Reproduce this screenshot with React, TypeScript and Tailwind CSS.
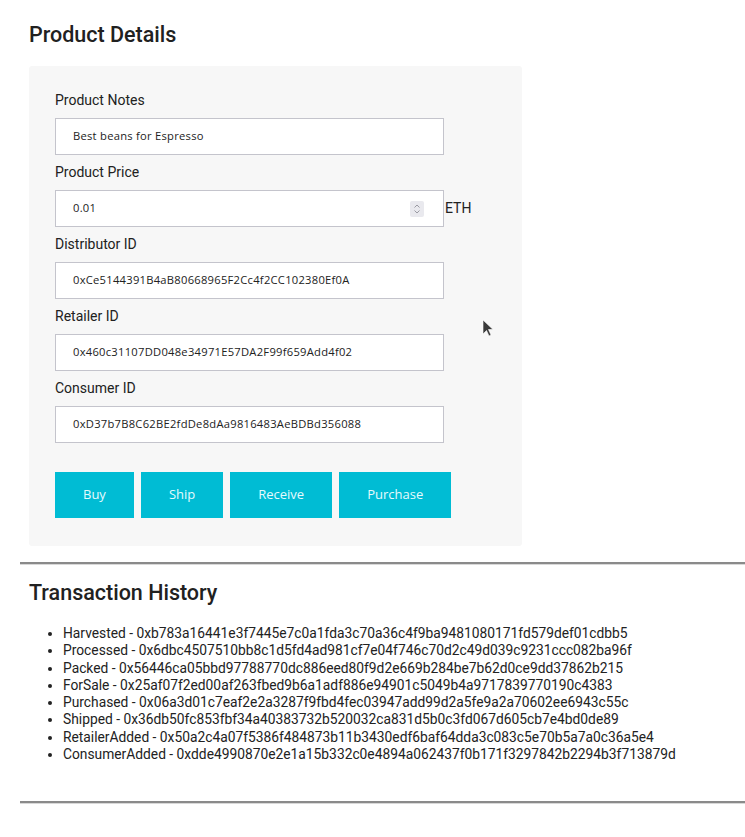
import React from "react";

const fields = [
  { label: "Product Notes", value: "Best beans for Espresso" },
  { label: "Product Price", value: "0.01", price: true },
  { label: "Distributor ID", value: "0xCe5144391B4aB80668965F2Cc4f2CC102380Ef0A" },
  { label: "Retailer ID", value: "0x460c31107DD048e34971E57DA2F99f659Add4f02" },
  { label: "Consumer ID", value: "0xD37b7B8C62BE2fdDe8dAa9816483AeBDBd356088" },
];

const history = [
  "Harvested - 0xb783a16441e3f7445e7c0a1fda3c70a36c4f9ba9481080171fd579def01cdbb5",
  "Processed - 0x6dbc4507510bb8c1d5fd4ad981cf7e04f746c70d2c49d039c9231ccc082ba96f",
  "Packed - 0x56446ca05bbd97788770dc886eed80f9d2e669b284be7b62d0ce9dd37862b215",
  "ForSale - 0x25af07f2ed00af263fbed9b6a1adf886e94901c5049b4a9717839770190c4383",
  "Purchased - 0x06a3d01c7eaf2e2a3287f9fbd4fec03947add99d2a5fe9a2a70602ee6943c55c",
  "Shipped - 0x36db50fc853fbf34a40383732b520032ca831d5b0c3fd067d605cb7e4bd0de89",
  "RetailerAdded - 0x50a2c4a07f5386f484873b11b3430edf6baf64dda3c083c5e70b5a7a0c36a5e4",
  "ConsumerAdded - 0xdde4990870e2e1a15b332c0e4894a062437f0b171f3297842b2294b3f713879d",
];

const buttons = ["Buy", "Ship", "Receive", "Purchase"];

const App = () => {
  return (
    <div className="relative min-h-[837px] bg-white pl-[20px] pt-[22px] font-['Roboto',sans-serif] text-[#212121]">
      <h2 className="ml-[9px] text-[21.5px] font-medium leading-[26px]">Product Details</h2>

      {/* Product form */}
      <div className="ml-[9px] mt-[18px] w-[493px] rounded-[3px] bg-[#f7f7f7] px-[26px] pb-[28px] pt-[25px]">
        {fields.map((f) => (
          <div key={f.label} className="mb-[8px]">
            <label className="block text-[14px] leading-[18px]">{f.label}</label>
            <div className="mt-[9px] flex items-center">
              <div className="flex h-[37px] w-[389px] items-center border border-[#c4c4cc] bg-white pl-[17px] pr-[19px] font-['Open_Sans',sans-serif] text-[11.2px] tracking-[0.26px] text-[#222]">
                <span className="flex-1">{f.value}</span>
                {f.price && (
                  <span className="flex h-[16px] w-[14px] flex-col items-center justify-center rounded-[2px] bg-[#e9e9ee]">
                    <svg width="8" height="12" viewBox="0 0 8 12" fill="none" stroke="#9a9aa2" strokeWidth="1">
                      <path d="M1.5 4.5 L4 2 L6.5 4.5" />
                      <path d="M1.5 7.5 L4 10 L6.5 7.5" />
                    </svg>
                  </span>
                )}
              </div>
              {f.price && <span className="ml-[1px] text-[14px] text-[#222]">ETH</span>}
            </div>
          </div>
        ))}

        <div className="mt-[29px] flex gap-[7px]">
          {buttons.map((b) => (
            <button
              key={b}
              className="h-[46px] bg-[#00bcd4] px-[28px] font-['Open_Sans',sans-serif] text-[13px] text-[#e6fafd]"
            >
              {b}
            </button>
          ))}
        </div>
      </div>

      <hr className="mt-[16px] border-t-2 border-t-[#8a8a8a] border-b border-b-[#d8d8d8]" />

      <h2 className="ml-[9px] mt-[15px] text-[21.5px] font-medium leading-[26px]">Transaction History</h2>

      <ul className="ml-[33px] mt-[19px] list-disc pl-[10px] text-[13.8px] leading-[17.3px] text-[#222]">
        {history.map((h) => (
          <li key={h}>{h}</li>
        ))}
      </ul>

      <hr className="mt-[38px] border-t-2 border-t-[#8a8a8a] border-b border-b-[#d8d8d8]" />

      {/* mouse pointer in screenshot */}
      <svg className="absolute left-[482px] top-[319px]" width="12" height="20" viewBox="0 0 12 20">
        <path d="M1 1 L1 15 L4.5 11.5 L7 17 L9 16 L6.5 10.5 L11 10.5 Z" fill="#3a3a3a" stroke="#fff" strokeWidth="0.6" />
      </svg>
    </div>
  );
};

export default App;
